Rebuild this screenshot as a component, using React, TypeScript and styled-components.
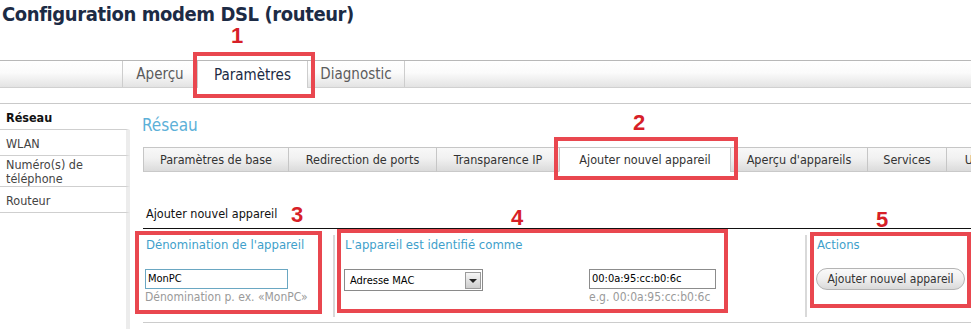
import React from 'react';
import styled, { createGlobalStyle } from 'styled-components';

const FONT = `"DejaVu Sans Condensed", Tahoma, "DejaVu Sans", sans-serif`;

const Global = createGlobalStyle`
  html, body { margin: 0; padding: 0; background: #fff; }
  body { font-family: ${FONT}; overflow: hidden; }
`;

const Page = styled.div`
  position: relative;
  width: 971px;
  height: 329px;
  overflow: hidden;
  background: #fff;
`;

const Title = styled.h1`
  margin: 0;
  height: 60px;
  box-sizing: border-box;
  padding: 4px 0 0 2px;
  font-size: 20px;
  line-height: 20px;
  font-weight: bold;
  color: #1c2b45;
  letter-spacing: -0.4px;
`;

const MainTabs = styled.nav`
  display: flex;
  height: 28px;
  box-sizing: border-box;
  border-top: 1px solid #b8b8b8;
  border-bottom: 1px solid #d0d0d0;
  background: linear-gradient(#ffffff 0%, #fbfbfb 45%, #e3e3e3 100%);
  padding-left: 122px;
  margin-bottom: 15px;
`;

const MainTab = styled.div<{ $active?: boolean; $w: number }>`
  width: ${(p) => p.$w}px;
  box-sizing: border-box;
  display: flex;
  align-items: center;
  justify-content: center;
  font-size: 15px;
  color: ${(p) => (p.$active ? '#1c2b45' : '#5c5c5c')};
  border-left: 1px solid #cdcdcd;
  background: ${(p) => (p.$active ? '#ffffff' : 'transparent')};
  margin-bottom: ${(p) => (p.$active ? '-1px' : '0')};
  &:last-child { border-right: 1px solid #cdcdcd; }
`;

const Body = styled.div`
  display: flex;
  border-top: 1px solid #c9c9c9;
  height: 226px;
`;

const Sidebar = styled.aside`
  width: 130px;
  flex: none;
  display: flex;
  flex-direction: column;
`;

const SideItem = styled.div<{ $active?: boolean; $lh?: number; $pad?: number }>`
  box-sizing: border-box;
  padding: ${(p) => (p.$pad ?? 4) + 1}px 5px ${(p) => (p.$pad ?? 4) - 1}px 6px;
  font-size: 12.5px;
  line-height: ${(p) => p.$lh ?? 17}px;
  font-weight: ${(p) => (p.$active ? 'bold' : 'normal')};
  color: ${(p) => (p.$active ? '#111' : '#444')};
  border-bottom: 1px solid #cfcfcf;
  border-right: 4px solid ${(p) => (p.$active ? 'transparent' : '#ececec')};
`;

const SideFill = styled.div`
  flex: 1;
  border-right: 4px solid #ececec;
`;

const Content = styled.main`
  flex: 1;
  min-width: 0;
  padding-left: 13px;
  overflow: hidden;
`;

const Heading = styled.h2`
  margin: 11px 0 0 -1px;
  font-size: 17px;
  line-height: 21px;
  font-weight: normal;
  color: #5cb0d8;
`;

const SubTabs = styled.div`
  display: flex;
  margin-top: 11px;
  height: 25px;
  white-space: nowrap;
`;

const SubTab = styled.div<{ $active?: boolean; $w: number }>`
  flex: none;
  width: ${(p) => p.$w}px;
  box-sizing: border-box;
  display: flex;
  align-items: center;
  justify-content: center;
  font-size: 12.5px;
  color: #333;
  border-top: 1px solid #c6c6c6;
  border-left: 1px solid #c6c6c6;
  border-bottom: 1px solid ${(p) => (p.$active ? '#ffffff' : '#c9c9c9')};
  background: ${(p) =>
    p.$active ? '#ffffff' : 'linear-gradient(#f8f8f8 0%, #f1f1f1 45%, #dbdbdb 100%)'};
  overflow: hidden;
`;

const SectionTitle = styled.h3`
  margin: 34px 0 0;
  padding: 0 0 6px 3px;
  font-size: 12.5px;
  line-height: 16px;
  font-weight: normal;
  color: #111;
  border-bottom: 1px solid #111;
`;

const Panels = styled.div`
  display: grid;
  grid-template-columns: 190px 472px 1fr;
  height: 93px;
  border-bottom: 1px solid #cccccc;
`;

const Panel = styled.section<{ $divided?: boolean; $padLeft: number }>`
  box-sizing: border-box;
  padding: ${(p) => (p.$divided ? '2px' : '8px')} 0 0 ${(p) => p.$padLeft}px;
  margin: ${(p) => (p.$divided ? '6px 0 5px' : '0')};
  border-left: ${(p) => (p.$divided ? '2px solid #d9d9d9' : 'none')};
`;

const PanelTitle = styled.div`
  font-size: 13px;
  line-height: 16px;
  color: #3f9fcb;
  margin-left: 1px;
`;

const FieldRow = styled.div<{ $gap?: number }>`
  display: flex;
  align-items: flex-start;
  gap: ${(p) => p.$gap ?? 0}px;
  margin-top: 16px;
`;

const FieldCol = styled.div`
  display: flex;
  flex-direction: column;
`;

const TextInput = styled.div<{ $w: number; $border: string }>`
  width: ${(p) => p.$w}px;
  height: 20px;
  box-sizing: border-box;
  border: 1px solid ${(p) => p.$border};
  background: #fff;
  font-size: 11px;
  line-height: 18px;
  padding-left: 2px;
  color: #000;
`;

const Hint = styled.div`
  font-size: 12px;
  line-height: 16px;
  color: #9a9a9a;
  white-space: nowrap;
`;

const Select = styled.div`
  width: 139px;
  height: 22px;
  box-sizing: border-box;
  border: 1px solid #8a8a8a;
  background: #fff;
  display: flex;
  align-items: center;
  justify-content: space-between;
  padding: 0 1px 0 5px;
  font-size: 11px;
  color: #000;
`;

const SelectArrow = styled.div`
  width: 16px;
  height: 17px;
  box-sizing: border-box;
  border: 1px solid #9a9a9a;
  background: linear-gradient(#f6f6f6, #cdcdcd);
  display: flex;
  align-items: center;
  justify-content: center;
  &::after {
    content: '';
    border-left: 4px solid transparent;
    border-right: 4px solid transparent;
    border-top: 4px solid #222;
    margin-top: 1px;
  }
`;

const PillButton = styled.button`
  width: 149px;
  height: 22px;
  margin-top: -1px;
  border: 1px solid #b4b4b4;
  border-radius: 11px;
  background: linear-gradient(#fafafa 0%, #efefef 50%, #d9d9d9 100%);
  font-family: ${FONT};
  font-size: 12px;
  color: #333;
  padding: 0;
  cursor: pointer;
`;

/* Red annotations drawn over the screenshot */
const Overlay = styled.div`
  position: absolute;
  inset: 0;
  pointer-events: none;
`;

const Frame = styled.div<{ $x: number; $y: number; $w: number; $h: number }>`
  position: absolute;
  left: ${(p) => p.$x}px;
  top: ${(p) => p.$y}px;
  width: ${(p) => p.$w}px;
  height: ${(p) => p.$h}px;
  box-sizing: border-box;
  border: 4px solid #e9474f;
`;

const Num = styled.div<{ $x: number; $y: number }>`
  position: absolute;
  left: ${(p) => p.$x}px;
  top: ${(p) => p.$y}px;
  font-family: "Liberation Sans", Arial, sans-serif;
  font-weight: bold;
  font-size: 22px;
  line-height: 16px;
  color: #d71f28;
`;

const mainTabs = [
  { label: 'Aperçu', w: 75 },
  { label: 'Paramètres', w: 110, active: true },
  { label: 'Diagnostic', w: 98 },
];

const subTabs = [
  { label: 'Paramètres de base', w: 145 },
  { label: 'Redirection de ports', w: 148 },
  { label: 'Transparence IP', w: 123 },
  { label: 'Ajouter nouvel appareil', w: 171, active: true },
  { label: "Aperçu d'appareils", w: 137 },
  { label: 'Services', w: 79 },
  { label: 'Utilisateurs', w: 100 },
];

const annotations = [
  { n: '1', f: [193, 52, 122, 46], p: [231, 28] },
  { n: '2', f: [554, 137, 184, 43], p: [633, 115] },
  { n: '3', f: [135, 231, 187, 83], p: [291, 207] },
  { n: '4', f: [337, 229, 391, 84], p: [511, 210] },
  { n: '5', f: [810, 232, 161, 76], p: [876, 212] },
];

export default function App() {
  return (
    <Page>
      <Global />
      <Title>Configuration modem DSL (routeur)</Title>
      <MainTabs>
        {mainTabs.map((t) => (
          <MainTab key={t.label} $w={t.w} $active={t.active}>
            {t.label}
          </MainTab>
        ))}
      </MainTabs>
      <Body>
        <Sidebar>
          <SideItem $active>Réseau</SideItem>
          <SideItem>WLAN</SideItem>
          <SideItem $lh={14} $pad={1}>
            Numéro(s) de
            <br />
            téléphone
          </SideItem>
          <SideItem>Routeur</SideItem>
          <SideFill />
        </Sidebar>
        <Content>
          <Heading>Réseau</Heading>
          <SubTabs>
            {subTabs.map((t) => (
              <SubTab key={t.label} $w={t.w} $active={t.active}>
                {t.label}
              </SubTab>
            ))}
          </SubTabs>
          <SectionTitle>Ajouter nouvel appareil</SectionTitle>
          <Panels>
            <Panel $padLeft={2}>
              <PanelTitle>Dénomination de l'appareil</PanelTitle>
              <FieldRow>
                <FieldCol>
                  <TextInput $w={143} $border="#6aa7c2">MonPC</TextInput>
                  <Hint>Dénomination p. ex. «MonPC»</Hint>
                </FieldCol>
              </FieldRow>
            </Panel>
            <Panel $divided $padLeft={9}>
              <PanelTitle>L'appareil est identifié comme</PanelTitle>
              <FieldRow $gap={106}>
                <Select>
                  <span>Adresse MAC</span>
                  <SelectArrow />
                </Select>
                <FieldCol>
                  <TextInput $w={127} $border="#8c8c8c">00:0a:95:cc:b0:6c</TextInput>
                  <Hint>e.g. 00:0a:95:cc:b0:6c</Hint>
                </FieldCol>
              </FieldRow>
            </Panel>
            <Panel $divided $padLeft={9}>
              <PanelTitle>Actions</PanelTitle>
              <FieldRow>
                <PillButton>Ajouter nouvel appareil</PillButton>
              </FieldRow>
            </Panel>
          </Panels>
        </Content>
      </Body>
      <Overlay>
        {annotations.map((a) => (
          <React.Fragment key={a.n}>
            <Frame $x={a.f[0]} $y={a.f[1]} $w={a.f[2]} $h={a.f[3]} />
            <Num $x={a.p[0]} $y={a.p[1]}>
              {a.n}
            </Num>
          </React.Fragment>
        ))}
      </Overlay>
    </Page>
  );
}
